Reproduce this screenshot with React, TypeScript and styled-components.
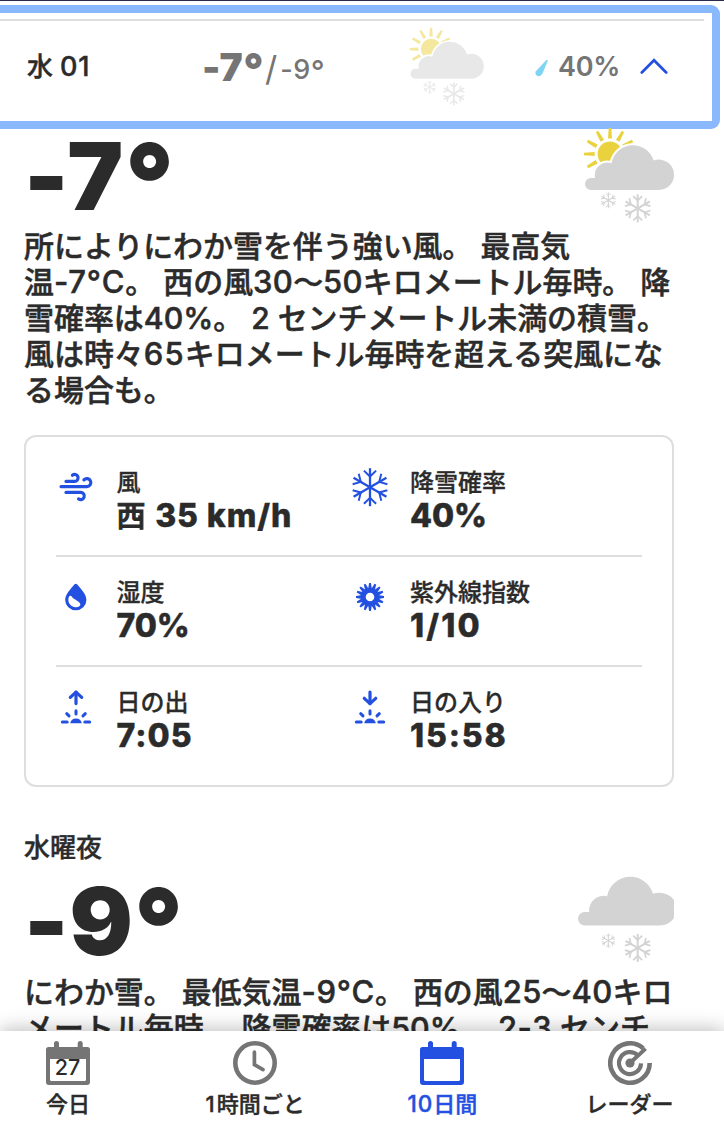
import React from "react";
import styled, { createGlobalStyle } from "styled-components";

const INK = "#2b2b2b";
const BLUE = "#2350e0";
const GREY = "#757575";
const RULE = "#dedede";
const CLOUD = "#d3d3d3";

const GlobalStyle = createGlobalStyle`
  * { box-sizing: border-box; }
  body {
    margin: 0;
    background: #fff;
    color: ${INK};
    font-family: Inter, "Noto Sans CJK JP", sans-serif;
  }
  svg { display: block; }
`;

const Screen = styled.div`
  position: relative;
  width: 724px;
  height: 1129px;
  overflow: hidden;
  background: #fff;
  border-top: 1px solid #2a2a4c;
`;

const DayHeader = styled.button`
  display: block;
  width: 720px;
  height: 124px;
  margin: 4px 0 0;
  padding: 6px 8px 0 0;
  border: solid #8ab8fc;
  border-width: 8px 8px 8px 0;
  border-radius: 0 9px 9px 0;
  background: #fff;
  color: ${INK};
  font-family: inherit;
  text-align: left;
`;

const HeaderRow = styled.div`
  display: grid;
  grid-template-columns: 175px 206px 127px 105px 1fr;
  height: 102px;
  padding-left: 27px;
  border-top: 2px solid ${RULE};
`;

const DayName = styled.span`
  padding-top: 30px;
  font-size: 26px;
  font-weight: 500;
  line-height: 32px;
  white-space: nowrap;
  -webkit-text-stroke: 0.4px currentColor;
`;

const Latin = styled.span<{ $size?: number; $track?: number }>`
  font-size: ${(p) => (p.$size ? `${p.$size}px` : "inherit")};
  line-height: 0;
  letter-spacing: ${(p) => p.$track ?? 0}px;
  font-feature-settings: "calt" 0;
`;

const Degree = styled.span`
  font-size: 1.13em;
  line-height: 0;
  vertical-align: -0.09em;
`;

const HeaderTemps = styled.span`
  display: flex;
  align-items: baseline;
  height: 60px;
  padding-top: 22px;
  color: ${GREY};
  white-space: nowrap;
  font-feature-settings: "calt" 0;
`;

const High = styled.span`
  font-size: 39px;
  font-weight: 900;
  line-height: 48px;
  letter-spacing: 0.4px;
`;

const Slash = styled.span`
  font-size: 34px;
  font-weight: 400;
  line-height: 40px;
  margin: 0 3px 0 1px;
`;

const Low = styled.span`
  font-size: 27px;
  font-weight: 500;
  line-height: 40px;
  letter-spacing: 0.5px;
  transform: translateY(-2px);
`;

const HeaderIcon = styled.span`
  padding-top: 5px;
  opacity: 0.5;
`;

const Precip = styled.span`
  display: flex;
  gap: 9px;
  padding-top: 30px;
  color: ${GREY};
  font-size: 27px;
  font-weight: 600;
  letter-spacing: -0.3px;
  line-height: 32px;
`;

const DropSlot = styled.span`
  padding-top: 8px;
`;

const ChevronSlot = styled.span`
  padding-top: 36px;
`;

const Period = styled.section<{ $top: number }>`
  padding: ${(p) => p.$top}px 50px 0 24px;
`;

const PeriodTitle = styled.h2`
  margin: 0;
  font-size: 26px;
  font-weight: 500;
  line-height: 32px;
  -webkit-text-stroke: 0.4px currentColor;
`;

const TempRow = styled.div<{ $height: number }>`
  display: flex;
  justify-content: space-between;
  height: ${(p) => p.$height}px;
`;

const BigTemp = styled.div<{ $top: number; $track: number }>`
  padding-top: ${(p) => p.$top}px;
  font-size: 94px;
  font-weight: 900;
  line-height: 94px;
  letter-spacing: ${(p) => p.$track}px;
  white-space: nowrap;
  font-feature-settings: "calt" 0;
`;

const PeriodIcon = styled.div<{ $shift: number }>`
  margin-top: ${(p) => p.$shift}px;
`;

const Narrative = styled.p`
  margin: 0;
  font-size: 29.95px;
  font-weight: 500;
  line-height: 36px;
  white-space: nowrap;
  -webkit-text-stroke: 0.5px currentColor;
`;

const Card = styled.div`
  height: 352px;
  margin: 27px 0 0;
  padding: 10px 30px 8px;
  border: 2px solid ${RULE};
  border-radius: 12px;
`;

const CardRow = styled.div`
  display: grid;
  grid-template-columns: 293.5px 1fr;
  height: 110px;
  border-bottom: 2px solid ${RULE};
  &:last-child { border-bottom: 0; }
`;

const Cell = styled.div`
  display: flex;
  gap: 20.4px;
  padding-top: 20px;
`;

const CellLabel = styled.div`
  padding-top: 1px;
  font-size: 24px;
  font-weight: 500;
  line-height: 30px;
  -webkit-text-stroke: 0.3px currentColor;
`;

const CellValue = styled.div<{ $track: number }>`
  margin-top: -1px;
  font-size: 32px;
  font-weight: 800;
  line-height: 38px;
  letter-spacing: ${(p) => p.$track}px;
  white-space: nowrap;
  -webkit-text-stroke: 0.4px currentColor;
`;

const Direction = styled.span`
  margin-right: 1px;
  font-size: 29px;
  font-weight: 500;
  line-height: 30px;
  -webkit-text-stroke: 1px currentColor;
`;

const Nav = styled.nav`
  position: absolute;
  left: 0;
  right: 0;
  bottom: 0;
  display: flex;
  gap: 87.2px;
  height: 98px;
  padding: 10px 0 0 18px;
  background: #fff;
  box-shadow: 0 -2px 18px rgba(0, 0, 0, 0.26);
`;

const NavItem = styled.div<{ $active?: boolean }>`
  display: flex;
  flex-direction: column;
  align-items: center;
  width: 100px;
  color: ${(p) => (p.$active ? BLUE : GREY)};
`;

const NavLabel = styled.span<{ $active?: boolean }>`
  margin-top: 4px;
  color: ${(p) => (p.$active ? BLUE : INK)};
  font-size: 22px;
  font-weight: 500;
  line-height: 30px;
  white-space: nowrap;
  -webkit-text-stroke: 0.4px currentColor;
`;

function Flake({ x, y, r, w }: { x: number; y: number; r: number; w: number }) {
  return (
    <g transform={`translate(${x} ${y})`} stroke="currentColor" fill="none">
      {[0, 60, 120, 180, 240, 300].map((a) => (
        <g key={a} transform={`rotate(${a})`}>
          <path d={`M0 0V${-r}`} strokeWidth={w} />
          <path
            d={`M${-r * 0.32} ${-r * 0.87}L0 ${-r * 0.56}L${r * 0.32} ${-r * 0.87}`}
            strokeWidth={w * 0.85}
          />
        </g>
      ))}
    </g>
  );
}

const DAY_CLOUD =
  "M9 64A6 6 0 0 1 9 52H13.2A12.5 12.5 0 0 1 29.6 37.3A21.6 21.6 0 0 1 71.6 34.6A15 15 0 0 1 92 49A15 15 0 0 1 77 64Z";
const NIGHT_CLOUD =
  "M6.7 49.5A6.7 6.7 0 0 1 6.7 36.1H11.2A14.6 14.6 0 0 1 29.1 20.2A23.6 23.6 0 0 1 75 17.8A16.4 16.4 0 0 1 81 16.7Q91 17 96 24V42Q91 49.5 81 49.5Z";

function DayIcon({ scale = 1 }: { scale?: number }) {
  return (
    <svg width={92 * scale} height={98 * scale} viewBox="0 0 92 98" color={CLOUD}>
      <g fill="#e9d23d">
        <circle cx="28" cy="28" r="12.4" />
        {[-120, -90, -60, -30, 0, 30, 60].map((a) => (
          <path key={a} d="M-1.3 -26H1.3L2 -15.4H-2Z" transform={`translate(28 28) rotate(${a})`} />
        ))}
      </g>
      <path d={DAY_CLOUD} fill={CLOUD} stroke="#fff" strokeWidth="4" />
      <path d={DAY_CLOUD} fill={CLOUD} />
      <Flake x={26.3} y={74.3} r={8} w={1.1} />
      <Flake x={55.7} y={82.3} r={14} w={2} />
    </svg>
  );
}

function NightIcon() {
  return (
    <svg width="96" height="90" viewBox="0 0 96 90" color={CLOUD}>
      <path d={NIGHT_CLOUD} fill={CLOUD} />
      <Flake x={30.3} y={64.6} r={7.2} w={1} />
      <Flake x={59.7} y={71.9} r={14} w={2} />
    </svg>
  );
}

function StatIcon({ children }: { children: React.ReactNode }) {
  return (
    <svg
      width="40"
      height="40"
      viewBox="0 0 40 40"
      color={BLUE}
      fill="none"
      stroke={BLUE}
      strokeWidth="3.2"
      strokeLinecap="round"
      strokeLinejoin="round"
    >
      {children}
    </svg>
  );
}

const WindIcon = () => (
  <StatIcon>
    <path d="M10 14.4H18.9A3.5 3.5 0 1 0 16.4 8.2" />
    <path d="M5 19.6H30.7A4 4 0 1 0 27.9 12.9" />
    <path d="M10 25.4H25A3.6 3.6 0 1 1 22.6 31.9" />
  </StatIcon>
);

const SnowIcon = () => (
  <StatIcon>
    <g strokeLinecap="butt" strokeLinejoin="miter">
      <Flake x={20} y={20.2} r={19} w={2.3} />
    </g>
  </StatIcon>
);

const HumidityIcon = () => (
  <StatIcon>
    <path
      d="M18.3 7.6Q19.8 5.7 21.3 7.6C25 12 30.4 17.6 30.4 23A10.6 10.3 0 0 1 9.2 23C9.2 17.6 14.6 12 18.3 7.6Z"
      fill={BLUE}
      stroke="none"
    />
    <path
      d="M13.2 19.2Q14.7 18.3 15.7 19.6C18 23 23.8 24.2 24.3 27.2C24.5 29.3 22.2 30.2 20 30.2C14.6 30 10.4 24.8 13.2 19.2Z"
      fill="#fff"
      stroke="none"
    />
  </StatIcon>
);

const UvIcon = () => (
  <StatIcon>
    <circle cx="20" cy="20" r="6.7" strokeWidth="4.8" />
    {Array.from({ length: 16 }, (_, i) => (
      <path
        key={i}
        d="M-1.9 -8L-0.9 -14H0.9L1.9 -8Z"
        fill={BLUE}
        stroke="none"
        transform={`translate(20 20) rotate(${i * 22.5})`}
      />
    ))}
  </StatIcon>
);

function SunEdgeIcon({ down }: { down?: boolean }) {
  return (
    <StatIcon>
      <path d="M20 5V16.6" />
      <path d={down ? "M14.3 11.3L20 16.6L25.7 11.3" : "M14.3 10.4L20 5.1L25.7 10.4"} />
      <g strokeWidth="3">
        <path d="M20 23.7V27M10.7 26.7L13 28.9M29.3 26.7L27 28.9M6.3 34.9H11.2M28.8 34.9H33.7" />
      </g>
      <path d="M14.2 36.3A5.9 5.9 0 0 1 25.8 36.3Z" fill={BLUE} stroke="none" />
    </StatIcon>
  );
}

function CalendarIcon({ day }: { day?: string }) {
  return (
    <svg width="44" height="44" viewBox="0 0 44 44">
      <path
        fill="currentColor"
        fillRule="evenodd"
        d="M8 6V2.5A2.5 2.5 0 0 1 13 2.5V6H31.7V2.5A2.5 2.5 0 0 1 36.7 2.5V6H41.5Q44 6 44 8.5V41Q44 44 41 44H3Q0 44 0 41V8.5Q0 6 2.5 6ZM4 18V38.5Q4 40 5.5 40H38.5Q40 40 40 38.5V18Z"
      />
      {day && (
        <text x="21.5" y="34" textAnchor="middle" fontSize="21.5" fontWeight="500" fill={INK}>
          {day}
        </text>
      )}
    </svg>
  );
}

const ClockIcon = () => (
  <svg width="44" height="44" viewBox="0 0 44 44" fill="none" stroke="currentColor">
    <circle cx="22" cy="22" r="19.7" strokeWidth="4.6" />
    <path d="M21.4 11.2V23.6L30 28.6" strokeWidth="3.7" strokeLinecap="round" />
  </svg>
);

const RadarIcon = () => (
  <svg width="44" height="44" viewBox="0 0 44 44" fill="none" stroke="currentColor">
    <path d="M41.7 22A19.7 19.7 0 1 1 35.2 7.4" strokeWidth="4.6" />
    <path d="M33 22.4A11 11 0 1 1 29.5 14" strokeWidth="4.2" />
    <path d="M22 22L37.6 7.6" strokeWidth="4" />
    <circle cx="22" cy="22" r="4.6" fill="currentColor" stroke="none" />
  </svg>
);

function Stat({
  icon,
  label,
  value,
  track = 0,
}: {
  icon: React.ReactNode;
  label: string;
  value: React.ReactNode;
  track?: number;
}) {
  return (
    <Cell>
      {icon}
      <div>
        <CellLabel>{label}</CellLabel>
        <CellValue $track={track}>{value}</CellValue>
      </div>
    </Cell>
  );
}

export default function App() {
  return (
    <>
      <GlobalStyle />
      <Screen lang="ja">
        <DayHeader>
          <HeaderRow>
            <DayName>
              水 <Latin $size={27} $track={0.8}>01</Latin>
            </DayName>
            <HeaderTemps>
              <High>
                -7<Degree>°</Degree>
              </High>
              <Slash>/</Slash>
              <Low>
                -9<Degree>°</Degree>
              </Low>
            </HeaderTemps>
            <HeaderIcon>
              <DayIcon scale={0.824} />
            </HeaderIcon>
            <Precip>
              <DropSlot>
                <svg width="14" height="18" viewBox="0 0 14 18">
                  <path
                    d="M11.2 1.2Q13 0 12.7 2L7.4 14.8Q5.8 17.8 2.4 17Q-.6 15.4 .9 12.2Z"
                    fill="#7fd4f4"
                  />
                </svg>
              </DropSlot>
              40%
            </Precip>
            <ChevronSlot>
              <svg width="28" height="18" viewBox="0 0 28 18">
                <path
                  d="M1.8 15.5L14 3.2L26.2 15.5"
                  fill="none"
                  stroke={BLUE}
                  strokeWidth="2.7"
                  strokeLinecap="round"
                />
              </svg>
            </ChevronSlot>
          </HeaderRow>
        </DayHeader>

        <Period $top={0}>
          <TempRow $height={99}>
            <BigTemp $top={0} $track={1.8}>
              -7<Degree>°</Degree>
            </BigTemp>
            <PeriodIcon $shift={-3}>
              <DayIcon />
            </PeriodIcon>
          </TempRow>
          <Narrative>
            所によりにわか雪を伴う強い風。 最高気
            <br />
            温<Latin $size={31} $track={0.8}>-7°C</Latin>。 西の風
            <Latin $size={31} $track={0.3}>30</Latin>〜<Latin $size={31} $track={0.3}>50</Latin>
            キロメートル毎時。 降
            <br />
            雪確率は<Latin $size={30.3}>40%</Latin>。 2 センチメートル未満の積雪。
            <br />
            風は時々<Latin $size={31} $track={1.2}>65</Latin>
            キロメートル毎時を超える突風にな
            <br />
            る場合も。
          </Narrative>
          <Card>
            <CardRow>
              <Stat
                icon={<WindIcon />}
                label="風"
                track={0.9}
                value={
                  <>
                    <Direction>西</Direction> 35 km/h
                  </>
                }
              />
              <Stat icon={<SnowIcon />} label="降雪確率" value="40%" />
            </CardRow>
            <CardRow>
              <Stat icon={<HumidityIcon />} label="湿度" value="70%" />
              <Stat icon={<UvIcon />} label="紫外線指数" value="1/10" track={2.2} />
            </CardRow>
            <CardRow>
              <Stat icon={<SunEdgeIcon />} label="日の出" value="7:05" track={1.1} />
              <Stat icon={<SunEdgeIcon down />} label="日の入り" value="15:58" track={1.9} />
            </CardRow>
          </Card>
        </Period>

        <Period $top={45}>
          <PeriodTitle>水曜夜</PeriodTitle>
          <TempRow $height={110}>
            <BigTemp $top={10} $track={1}>
              -9<Degree>°</Degree>
            </BigTemp>
            <PeriodIcon $shift={12}>
              <NightIcon />
            </PeriodIcon>
          </TempRow>
          <Narrative>
            にわか雪。 最低気温<Latin $size={31} $track={0.7}>-9°C</Latin>。 西の風
            <Latin $size={31} $track={0.3}>25</Latin>〜<Latin $size={31} $track={0.3}>40</Latin>
            キロ
            <br />
            メートル毎時。 降雪確率は<Latin $size={30.5}>50%</Latin>。{" "}
            <Latin $size={31} $track={0.5}>2-3</Latin> センチ
          </Narrative>
        </Period>

        <Nav>
          <NavItem>
            <CalendarIcon day="27" />
            <NavLabel>今日</NavLabel>
          </NavItem>
          <NavItem>
            <ClockIcon />
            <NavLabel>
              <Latin $track={2}>1</Latin>時間ごと
            </NavLabel>
          </NavItem>
          <NavItem $active>
            <CalendarIcon />
            <NavLabel $active>
              <Latin $size={22.5} $track={1}>10</Latin>日間
            </NavLabel>
          </NavItem>
          <NavItem>
            <RadarIcon />
            <NavLabel>レーダー</NavLabel>
          </NavItem>
        </Nav>
      </Screen>
    </>
  );
}
